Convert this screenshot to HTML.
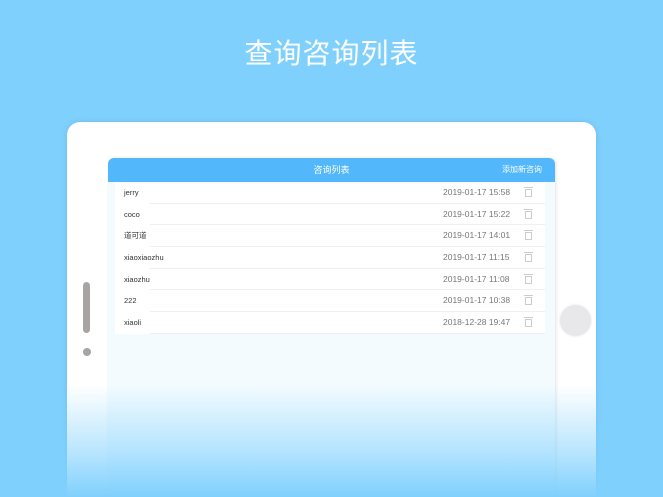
<!DOCTYPE html>
<html><head><meta charset="utf-8"><style>
*{margin:0;padding:0;box-sizing:border-box}
html,body{width:663px;height:497px;overflow:hidden}
body{background:#7fd0fd;position:relative;font-family:"Liberation Sans","Noto Sans CJK SC",sans-serif}
.title{position:absolute;top:32px;left:0;width:663px;text-align:center;color:#fff;font-size:28px;letter-spacing:1px}
.tab{position:absolute;left:67px;top:122px;width:529px;height:375px;background:#fff;border-radius:13px 13px 0 0;box-shadow:0 0 6px rgba(80,160,220,.4)}
.scr{position:absolute;left:108px;top:158px;width:447px;height:339px;background:#f3fbff;border-radius:6px 6px 0 0;box-shadow:1px 0 3px rgba(0,0,0,.12)}
.hd{height:24px;background:#52b7fb;border-radius:6px 6px 0 0;color:#fff;font-size:9px;line-height:24px;text-align:center;position:relative}
.hd span{position:absolute;right:13px;top:0;font-size:8px}
.list{position:absolute;left:7px;top:24px;width:430px;background:#fff}
.row{height:21.7px;position:relative;font-size:7.5px;color:#333;line-height:21.7px;padding-left:9px}
.row:after{content:"";position:absolute;left:35px;right:0;bottom:0;height:1px;background:#eef1f3}
.row .d{position:absolute;left:328px;top:0;color:#777;font-size:8.5px}
.row .t{position:absolute;left:410px;top:7px;width:7px;height:8px;border:1px solid #ccc}
.row .t:before{content:"";position:absolute;left:-2px;top:-3px;width:9px;height:1px;background:#ccc}
.bar{position:absolute;left:83px;top:282px;width:7px;height:51px;border-radius:4px;background:#a8a4a3}
.dot{position:absolute;left:83px;top:348px;width:8px;height:8px;border-radius:50%;background:#a8a4a3}
.home{position:absolute;left:561px;top:306px;width:29px;height:29px;border-radius:50%;background:#e8e8ea;box-shadow:0 0 3px rgba(0,0,0,.25)}
.fade{position:absolute;left:0;top:385px;width:663px;height:112px;background:linear-gradient(rgba(127,208,253,0),rgba(127,208,253,.55) 60%,#7fd0fd)}
</style></head><body>
<div class="title">查询咨询列表</div>
<div class="tab"></div>
<div class="bar"></div><div class="dot"></div><div class="home"></div>
<div class="scr">
<div class="hd">咨询列表<span>添加新咨询</span></div>
<div class="list">
<div class="row">jerry<span class="d">2019-01-17 15:58</span><i class="t"></i></div>
<div class="row">coco<span class="d">2019-01-17 15:22</span><i class="t"></i></div>
<div class="row">道可道<span class="d">2019-01-17 14:01</span><i class="t"></i></div>
<div class="row">xiaoxiaozhu<span class="d">2019-01-17 11:15</span><i class="t"></i></div>
<div class="row">xiaozhu<span class="d">2019-01-17 11:08</span><i class="t"></i></div>
<div class="row">222<span class="d">2019-01-17 10:38</span><i class="t"></i></div>
<div class="row">xiaoli<span class="d">2018-12-28 19:47</span><i class="t"></i></div>
</div>
</div>
<div class="fade"></div>
</body></html>
